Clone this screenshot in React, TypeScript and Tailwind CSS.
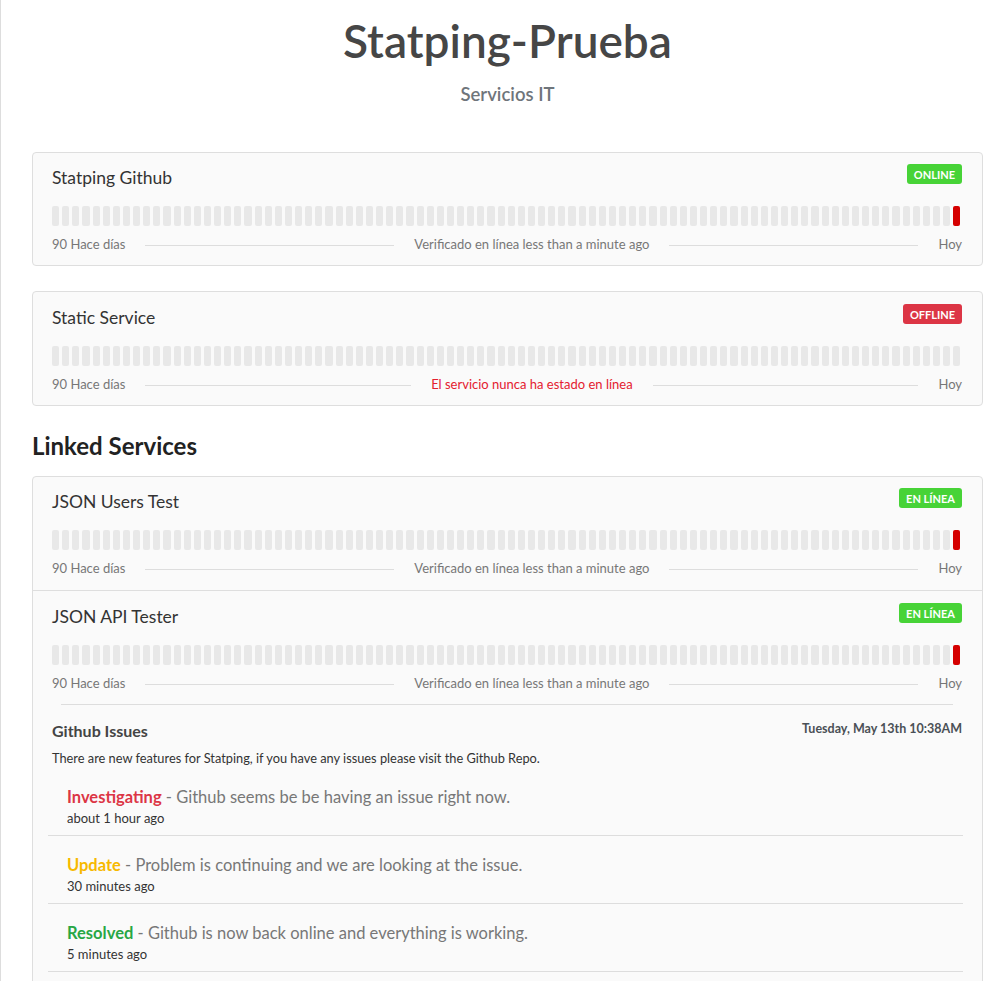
import React from "react";

const FONT = { fontFamily: "Lato, 'Open Sans', sans-serif" };

function Bars({ redLast }: { redLast: boolean }) {
  const items = Array.from({ length: 90 });
  return (
    <div className="mt-[15px] flex h-5 gap-[3px] pr-[2px]">
      {items.map((_, i) => (
        <div
          key={i}
          className={
            i === 89 && redLast
              ? "flex-1 rounded-[2px] bg-[#d50000]"
              : "flex-1 rounded-[2px] bg-[#e8e8e8]"
          }
        />
      ))}
    </div>
  );
}

function Badge({ label, color }: { label: string; color: "green" | "red" }) {
  return (
    <span
      className={
        (color === "green" ? "bg-[#47d337]" : "bg-[#dc3545]") +
        " inline-flex h-5 items-center rounded-[3px] px-[7px] text-[11px] font-bold leading-none text-white"
      }
    >
      {label}
    </span>
  );
}

function Footer({ center, red }: { center: string; red?: boolean }) {
  return (
    <div className="mt-[9px] flex h-5 items-center gap-5 text-[13px] text-[#777]">
      <span>90 Hace días</span>
      <div className="h-px flex-1 bg-[#dddddd]" />
      <span className={red ? "text-[#e4202f]" : ""}>{center}</span>
      <div className="h-px flex-1 bg-[#dddddd]" />
      <span>Hoy</span>
    </div>
  );
}

function ServiceBody({
  name,
  badge,
  color,
  redLast,
  center,
  red,
}: {
  name: string;
  badge: string;
  color: "green" | "red";
  redLast: boolean;
  center: string;
  red?: boolean;
}) {
  return (
    <>
      <div className="flex h-[27px] items-start justify-between">
        <span className="text-[17.5px] leading-[27px] text-[#333]">{name}</span>
        <Badge label={badge} color={color} />
      </div>
      <Bars redLast={redLast} />
      <Footer center={center} red={red} />
    </>
  );
}

function Incident({
  label,
  color,
  text,
  time,
}: {
  label: string;
  color: string;
  text: string;
  time: string;
}) {
  return (
    <div className="border-b border-[#dddddd] pl-[19px] pr-[19px] pb-[8px] pt-[18px]">
      <div className="text-[16.5px] leading-[22px] text-[#777]">
        <span className={color + " font-bold"}>{label}</span> - {text}
      </div>
      <div className="mt-px text-[13px] leading-[18px] text-[#333]">{time}</div>
    </div>
  );
}

export default function App() {
  return (
    <div
      className="h-[981px] overflow-hidden border-l border-[#dddddd] bg-white"
      style={FONT}
    >
      <div className="ml-[31px] w-[951px]">
        <div className="pt-[12px] text-center">
          <h1 className="text-[46px] font-semibold leading-[58px] text-[#464646]">
            Statping-Prueba
          </h1>
          <div className="mt-[12px] text-[18.5px] font-semibold leading-[24px] text-[#6f757b]">
            Servicios IT
          </div>
        </div>

        <div className="mt-[46px] rounded border border-[#dedede] bg-[#fafafa] pl-[19px] pr-[20px] pb-[10px] pt-[11px]">
          <ServiceBody
            name="Statping Github"
            badge="ONLINE"
            color="green"
            redLast
            center="Verificado en línea less than a minute ago"
          />
        </div>

        <div className="mt-[25px] rounded border border-[#dedede] bg-[#fafafa] pl-[19px] pr-[20px] pb-[10px] pt-[12px]">
          <ServiceBody
            name="Static Service"
            badge="OFFLINE"
            color="red"
            redLast={false}
            center="El servicio nunca ha estado en línea"
            red
          />
        </div>

        <h2 className="mt-[25px] text-[24px] font-bold leading-[29px] text-[#222]">
          Linked Services
        </h2>

        <div className="mt-[16px] rounded border border-[#dedede] bg-[#fafafa] pb-10">
          <div className="pl-[19px] pr-[20px] pb-[11px] pt-[11px]">
            <ServiceBody
              name="JSON Users Test"
              badge="EN LÍNEA"
              color="green"
              redLast
              center="Verificado en línea less than a minute ago"
            />
          </div>
          <div className="border-t border-[#dedede] pl-[19px] pr-[20px] pt-[12px]">
            <ServiceBody
              name="JSON API Tester"
              badge="EN LÍNEA"
              color="green"
              redLast
              center="Verificado en línea less than a minute ago"
            />
            <div className="mx-[9px] mt-[10px] h-px bg-[#dddddd]" />
            <div className="mt-[15px] flex h-[22px] items-center justify-between">
              <span className="text-[16px] font-bold leading-[22px] text-[#444]">
                Github Issues
              </span>
              <span className="-mt-[3px] text-[12.5px] font-bold text-[#4a5056]">
                Tuesday, May 13th 10:38AM
              </span>
            </div>
            <div className="mt-[7px] text-[12.8px] leading-[18px] text-[#333]">
              There are new features for Statping, if you have any issues please visit the Github Repo.
            </div>
            <div className="-ml-[4px] -mr-px mt-px">
              <Incident
                label="Investigating"
                color="text-[#dc3545]"
                text="Github seems be be having an issue right now."
                time="about 1 hour ago"
              />
              <Incident
                label="Update"
                color="text-[#f7b900]"
                text="Problem is continuing and we are looking at the issue."
                time="30 minutes ago"
              />
              <Incident
                label="Resolved"
                color="text-[#28a745]"
                text="Github is now back online and everything is working."
                time="5 minutes ago"
              />
            </div>
          </div>
        </div>
      </div>
    </div>
  );
}
